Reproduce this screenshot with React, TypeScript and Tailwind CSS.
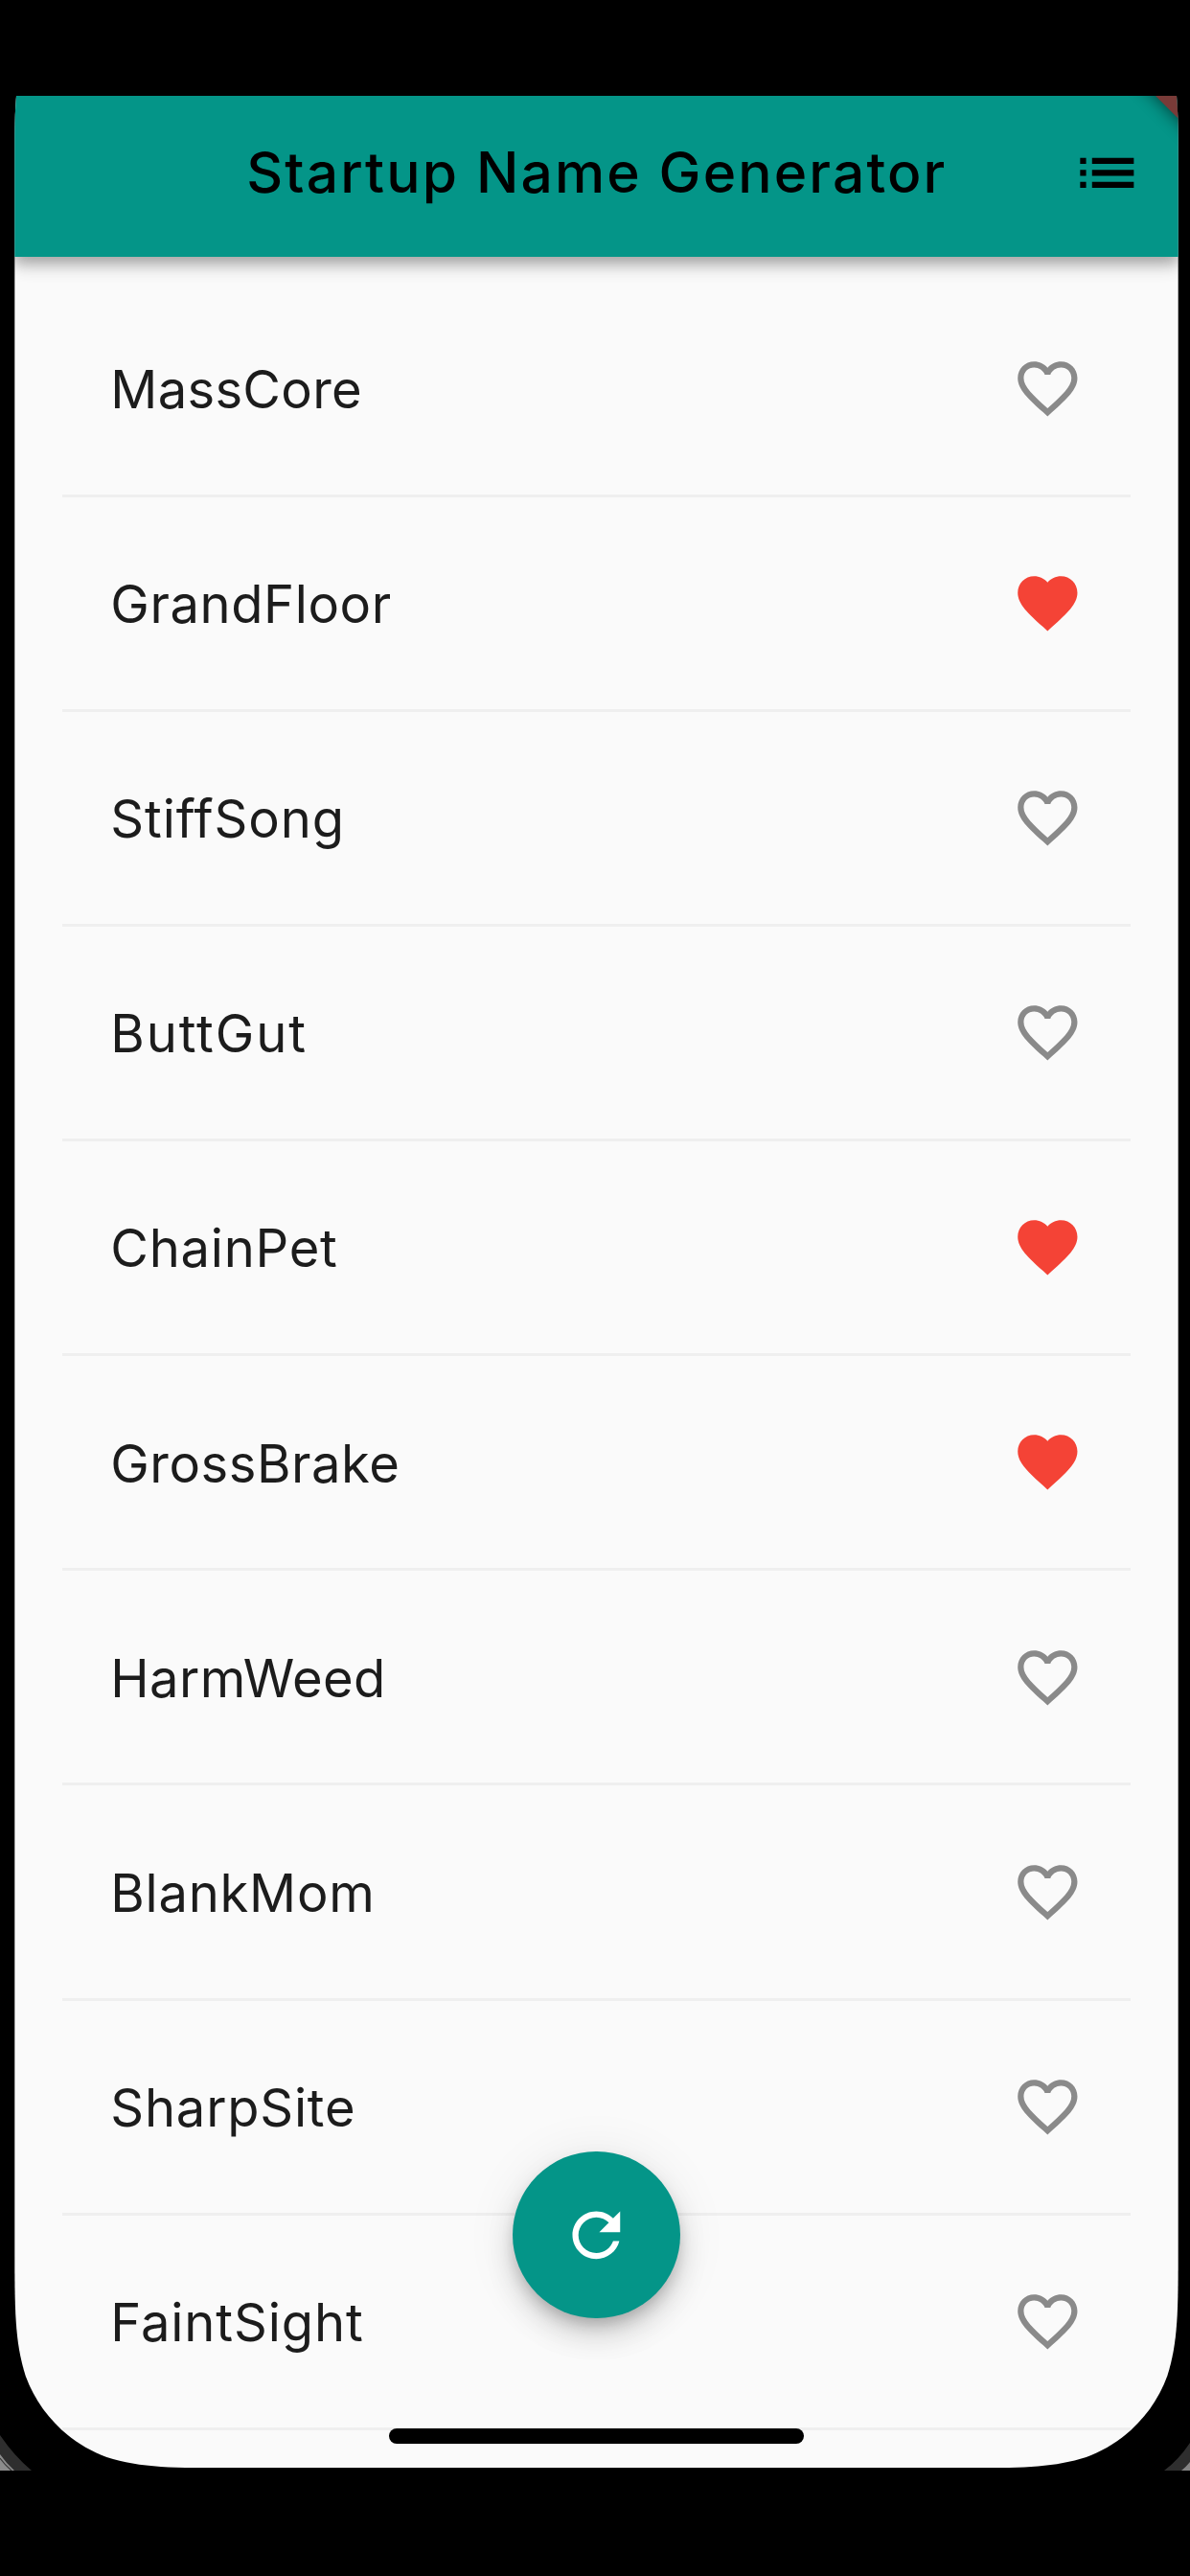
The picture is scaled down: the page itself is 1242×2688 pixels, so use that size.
const suggestions: { name: string; saved: boolean; tracking: string }[] = [
  { name: "MassCore", saved: false, tracking: "tracking-[0.3px]" },
  { name: "GrandFloor", saved: true, tracking: "tracking-[0.6px]" },
  { name: "StiffSong", saved: false, tracking: "tracking-[0.9px]" },
  { name: "ButtGut", saved: false, tracking: "tracking-[1.9px]" },
  { name: "ChainPet", saved: true, tracking: "tracking-[0.75px]" },
  { name: "GrossBrake", saved: true, tracking: "tracking-[0.55px]" },
  { name: "HarmWeed", saved: false, tracking: "tracking-[0.4px]" },
  { name: "BlankMom", saved: false, tracking: "tracking-[0.75px]" },
  { name: "SharpSite", saved: false, tracking: "tracking-[0.8px]" },
  { name: "FaintSight", saved: false, tracking: "tracking-[0.9px]" },
];

function Heart({ saved }: { saved: boolean }) {
  return (
    <svg viewBox="0 0 24 24" className={saved ? "size-[74.7px] fill-[#f44336]" : "size-[74.7px] fill-[#8a8a8a]"}>
      {saved ? (
        <path d="M12 21.35l-1.45-1.32C5.4 15.36 2 12.28 2 8.5 2 5.42 4.42 3 7.5 3c1.74 0 3.41.81 4.5 2.09C13.09 3.81 14.76 3 16.5 3 19.58 3 22 5.42 22 8.5c0 3.78-3.4 6.86-8.55 11.54L12 21.35z" />
      ) : (
        <path d="M16.5 3c-1.74 0-3.41.81-4.5 2.09C10.91 3.81 9.24 3 7.5 3 4.42 3 2 5.42 2 8.5c0 3.78 3.4 6.86 8.55 11.54L12 21.35l1.45-1.32C18.6 15.36 22 12.28 22 8.5 22 5.42 19.58 3 16.5 3zm-4.4 15.55l-.1.1-.1-.1C7.14 14.24 4 11.39 4 8.5 4 6.5 5.5 5 7.5 5c1.54 0 3.04.99 3.57 2.36h1.87C13.46 5.99 14.96 5 16.5 5c2 0 3.5 1.5 3.5 3.5 0 2.89-3.14 5.74-7.9 10.05z" />
      )}
    </svg>
  );
}

function AppBar() {
  return (
    <header className="relative z-10 flex h-[167.5px] items-center justify-between bg-[#049588] pr-[37px] pb-[6px] pl-[242px] shadow-[0_6px_12px_rgba(0,0,0,0.2),0_12px_16px_rgba(0,0,0,0.1),0_3px_24px_rgba(0,0,0,0.12)]">
      <h1 className="text-[58.7px] leading-none font-medium tracking-[2.15px] whitespace-nowrap text-black">
        Startup Name Generator
      </h1>
      <svg viewBox="0 0 24 24" className="size-[74.7px] fill-black">
        <path d="M3 13h2v-2H3v2zm0 4h2v-2H3v2zm0-8h2V7H3v2zm4 4h14v-2H7v2zm0 4h14v-2H7v2zM7 7v2h14V7H7z" />
      </svg>
      <svg viewBox="0 0 70 70" className="absolute top-0 right-0 size-[70px] overflow-hidden">
        <defs>
          <filter id="ribbon-shadow" x="-100%" y="-100%" width="300%" height="300%">
            <feGaussianBlur stdDeviation="9" />
          </filter>
        </defs>
        <path d="M6-40L110 64V-40Z" fill="#000" opacity="0.6" filter="url(#ribbon-shadow)" />
        <path d="M46 0L70 24V0Z" fill="#793b38" />
      </svg>
    </header>
  );
}

function Bezel() {
  return (
    <svg viewBox="0 0 1242 60" className="absolute bottom-[110px] left-0 h-[60px] w-[1242px]">
      <path d="M0 23Q15 45 33 60H0Z" fill="#2e2e2e" />
      <path d="M0 43Q7 53 15 60H0Z" fill="#8c8c8c" />
      <path d="M0 47Q5 54 12 60" fill="none" stroke="#3a3a3a" strokeWidth="1.2" />
      <path d="M1242 31Q1230 49 1215 60H1242Z" fill="#2e2e2e" />
      <path d="M1242 51Q1238 56 1233 60H1242Z" fill="#858585" />
    </svg>
  );
}

export default function App() {
  return (
    <div className="relative h-[2688px] w-[1242px] overflow-hidden bg-black pt-[100px] pl-[15.3px] font-['Inter',sans-serif]">
      <Bezel />
      <main className="relative h-[2475.3px] w-[1214.4px] overflow-hidden bg-[#fafafa] [clip-path:path('M1.7_0H1212.7Q1214.4_20_1214.4_45V2243C1214.4_2310_1214.4_2343.3_1203_2379.3C1188.7_2418.6_1157.7_2449.6_1118.4_2463.9C1082.4_2475.3_1049_2475.3_982_2475.3H232.4C165.4_2475.3_132_2475.3_96_2463.9C56.7_2449.6_25.7_2418.6_11.4_2379.3C0_2343.3_0_2310_0_2243V45Q0_20_1.7_0Z')]">
        <AppBar />
        <ul className="flex flex-col px-[50px] pt-[27px]">
          {suggestions.map(({ name, saved, tracking }) => (
            <li
              key={name}
              className="flex h-[224.15px] shrink-0 items-center justify-between border-b-[3px] border-[#efefef] pr-[49.5px] pl-[50px]"
            >
              <span className={`pt-[2px] text-[54.3px] leading-none text-[#1c1c1c] ${tracking}`}>{name}</span>
              <Heart saved={saved} />
            </li>
          ))}
        </ul>
        {/* Floating action button and home indicator, over the list */}
        <div className="absolute inset-x-0 bottom-0 flex flex-col items-center gap-[115.2px] pb-[25.4px]">
          <button
            aria-label="Refresh"
            className="flex size-[174.4px] items-center justify-center rounded-full bg-[#049588] shadow-[0_9px_15px_-3px_rgba(0,0,0,0.2),0_18px_30px_rgba(0,0,0,0.14),0_3px_54px_rgba(0,0,0,0.08)]"
          >
            <svg viewBox="0 0 24 24" className="size-[74.7px] fill-white">
              <path d="M17.65 6.35C16.2 4.9 14.21 4 12 4c-4.42 0-7.99 3.58-7.99 8s3.57 8 7.99 8c3.73 0 6.84-2.55 7.73-6h-2.08c-.82 2.33-3.04 4-5.65 4-3.31 0-6-2.69-6-6s2.69-6 6-6c1.66 0 3.14.69 4.22 1.78L13 11h7V4l-2.35 2.35z" />
            </svg>
          </button>
          <div className="h-[15.6px] w-[433px] rounded-full bg-black" />
        </div>
      </main>
    </div>
  );
}
